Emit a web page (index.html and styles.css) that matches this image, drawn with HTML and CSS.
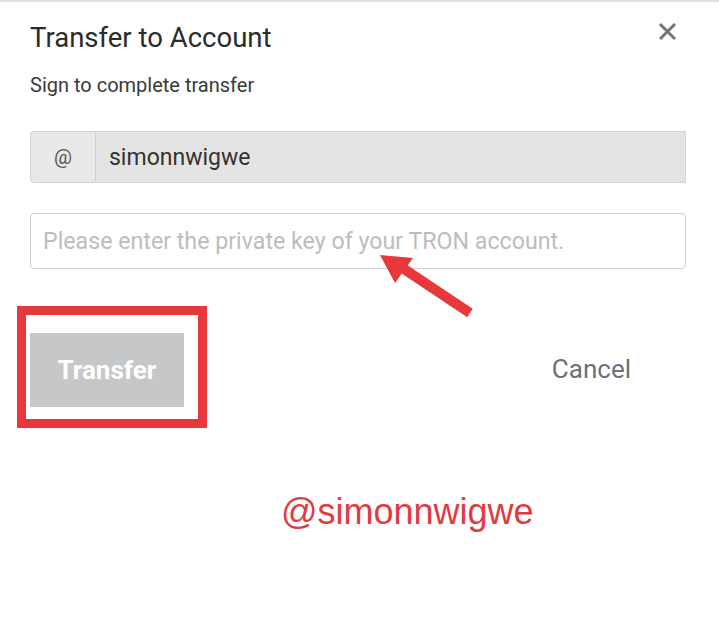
FILE: index.html
```html
<!DOCTYPE html>
<html lang="en">
<head>
    <meta charset="UTF-8">
    <title>Transfer to Account</title>
    <link rel="stylesheet" href="styles.css">
</head>
<body>
    <div class="dialog">
        <div class="dialog-header">
            <h2 class="dialog-title">Transfer to Account</h2>
            <button class="close-btn" aria-label="Close">
                <svg width="19" height="19" viewBox="0 0 19 19">
                    <path d="M2 2 L17 17 M17 2 L2 17" stroke="#757575" stroke-width="3"/>
                </svg>
            </button>
        </div>
        <p class="dialog-subtitle">Sign to complete transfer</p>

        <div class="input-group">
            <span class="input-addon">@</span>
            <input type="text" class="input-readonly" value="simonnwigwe" readonly>
        </div>

        <input type="password" class="key-input" placeholder="Please enter the private key of your TRON account.">

        <div class="dialog-footer">
            <div class="highlight-box">
                <button class="transfer-btn" disabled>Transfer</button>
            </div>
            <button class="cancel-btn">Cancel</button>
        </div>

        <div class="watermark">@simonnwigwe</div>

        <!-- annotation arrow pointing at the key field -->
        <svg class="arrow" width="110" height="80" viewBox="0 0 110 80">
            <line x1="100" y1="68" x2="28" y2="20" stroke="#e8383b" stroke-width="10"/>
            <polygon points="10,10 43,13 25,38" fill="#e8383b"/>
        </svg>
    </div>
</body>
</html>
```

FILE: styles.css
```css
body {
    margin: 0;
    background: #fff;
    font-family: Roboto, 'Noto Sans', sans-serif;
    color: #333;
}
.dialog {
    position: relative;
    border-top: 2px solid #e2e2e2;
    padding: 18px 33px 0 30px;
    height: 607px;
}
.dialog-header {
    display: flex;
    justify-content: space-between;
    align-items: flex-start;
}
.dialog-title {
    margin: 0;
    font-size: 27.5px;
    line-height: 36px;
    font-weight: 400;
    color: #2b2b2b;
}
.close-btn {
    border: none;
    background: none;
    padding: 0;
    margin: 2px 9px 0 0;
    cursor: pointer;
}
.dialog-subtitle {
    margin: 16px 0 0;
    font-size: 20px;
    line-height: 26px;
    color: #3a3a3a;
}
.input-group {
    display: flex;
    margin-top: 33px;
    height: 52px;
}
.input-addon {
    width: 66px;
    display: flex;
    align-items: center;
    justify-content: center;
    background: #e9e9e9;
    border: 1px solid #d4d4d4;
    border-right: 1px solid #d0d0d0;
    border-radius: 4px 0 0 4px;
    box-sizing: border-box;
    font-size: 20px;
    color: #555;
}
.input-readonly {
    flex: 1;
    min-width: 0;
    background: #e4e4e4;
    border: 1px solid #d4d4d4;
    border-left: none;
    padding: 0 13px;
    font-family: inherit;
    font-size: 23px;
    color: #333;
    outline: none;
}
.key-input {
    display: block;
    width: 100%;
    box-sizing: border-box;
    margin-top: 30px;
    height: 56px;
    border: 1px solid #cfcfcf;
    border-radius: 4px;
    padding: 0 12px;
    font-family: inherit;
    font-size: 23.2px;
    outline: none;
}
.key-input::placeholder {
    color: #bdbdbd;
}
.dialog-footer {
    display: flex;
    justify-content: space-between;
    align-items: center;
    margin-top: 37px;
    padding-right: 55px;
}
.highlight-box {
    margin-left: -13px;
    border: 9px solid #e8383b;
    padding: 18px 14px 12px 4px;
}
.transfer-btn {
    width: 154px;
    height: 74px;
    border: none;
    background: #c6c7c9;
    color: #fff;
    font-family: inherit;
    font-size: 26px;
    font-weight: 700;
}
.cancel-btn {
    border: none;
    background: none;
    padding: 4px 0 0;
    font-family: inherit;
    font-size: 26px;
    color: #6b7177;
    cursor: pointer;
}
.watermark {
    margin: 63px 0 0 251px;
    font-family: 'Liberation Sans', Arial, sans-serif;
    font-size: 36px;
    color: #e23b3f;
}
.arrow {
    position: absolute;
    left: 370px;
    top: 243px;
}
```
